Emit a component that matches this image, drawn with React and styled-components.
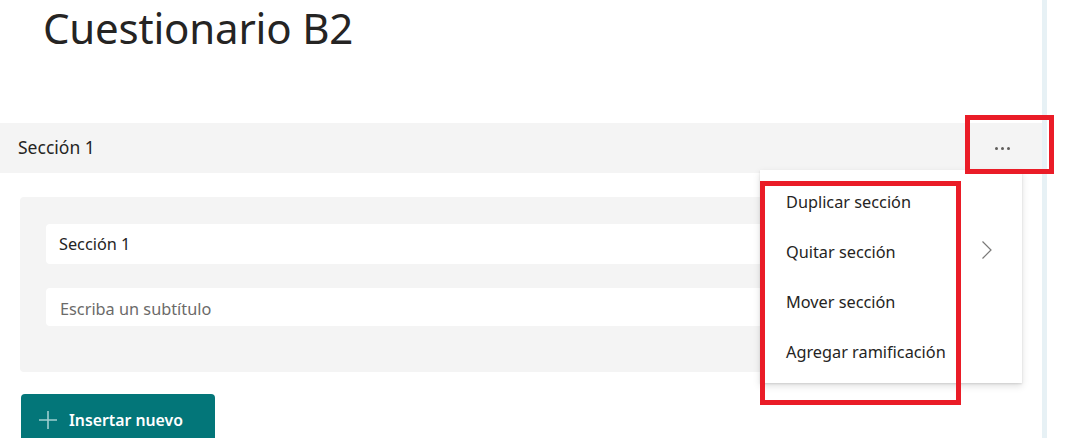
import React from "react";
import styled, { createGlobalStyle } from "styled-components";

const Global = createGlobalStyle`
  html, body { margin: 0; padding: 0; background: #ffffff; }
  body { font-family: "Noto Sans", "Open Sans", sans-serif; color: #252423; }
  * { box-sizing: border-box; }
`;

const Page = styled.div`
  display: flex;
  width: 1090px;
  min-height: 438px;
  overflow: hidden;
`;

const Main = styled.div`
  width: 1042px;
  flex: none;
`;

const Rule = styled.div`
  width: 5px;
  flex: none;
  background: #e7f1f5;
`;

const Title = styled.h1`
  margin: 0;
  padding: 0 0 0 43px;
  height: 123px;
  font-size: 42px;
  font-weight: 400;
  line-height: 55px;
  color: #252423;
  letter-spacing: -0.2px;
`;

const SectionBar = styled.div`
  position: relative;
  height: 50px;
  background: #f4f4f4;
  display: flex;
  align-items: center;
  justify-content: space-between;
  padding-left: 18px;
`;

const SectionName = styled.span`
  font-size: 17.5px;
  color: #252423;
  padding-bottom: 3px;
`;

const MoreButton = styled.button`
  width: 64px;
  height: 50px;
  margin-right: 8px;
  border: none;
  background: transparent;
  display: flex;
  align-items: center;
  justify-content: center;
  gap: 3px;
  padding: 0;
`;

const Dot = styled.span`
  width: 3px;
  height: 3px;
  border-radius: 50%;
  background: #605e5c;
`;

const Highlight = styled.div`
  position: absolute;
  border: 5px solid #ea1c27;
  pointer-events: none;
  z-index: 5;
`;

const MoreHighlight = styled(Highlight)`
  left: 965px;
  top: -8px;
  width: 89px;
  height: 59px;
`;

const Menu = styled.div`
  position: absolute;
  left: 760px;
  top: 47px;
  width: 262px;
  background: #ffffff;
  padding: 7px 0 6px;
  box-shadow: 0 3.2px 7.2px rgba(0, 0, 0, 0.13), 0 0.6px 1.8px rgba(0, 0, 0, 0.11);
  z-index: 4;
`;

const MenuItem = styled.div`
  height: 50px;
  display: flex;
  align-items: center;
  padding-left: 26px;
  font-size: 16.3px;
  color: #252423;
`;

const MenuHighlight = styled(Highlight)`
  left: 0;
  top: 11px;
  width: 201px;
  height: 224px;
`;

const Chevron = styled.svg`
  position: absolute;
  right: 29px;
  top: 70px;
`;

const Content = styled.div`
  padding: 24px 20px 0 20px;
  display: flex;
  flex-direction: column;
  gap: 22px;
`;

const Card = styled.div`
  background: #f4f4f4;
  border-radius: 4px;
  padding: 27px 26px 46px 26px;
  display: flex;
  flex-direction: column;
  gap: 24px;
`;

const Field = styled.div`
  height: ${(p) => p.$h}px;
  background: #ffffff;
  border-radius: 4px;
  display: flex;
  align-items: center;
  padding-left: ${(p) => (p.$placeholder ? 14 : 13)}px;
  padding-top: ${(p) => (p.$placeholder ? 3 : 0)}px;
  font-size: 16.3px;
  color: ${(p) => (p.$placeholder ? "#6b6a69" : "#252423")};
`;

const InsertButton = styled.button`
  width: 194px;
  height: 48px;
  margin-left: 1px;
  border: none;
  border-radius: 4px;
  background: #037679;
  color: #ffffff;
  display: flex;
  align-items: center;
  gap: 12px;
  padding: 3px 0 0 18px;
  font-family: "Noto Sans", sans-serif;
  font-size: 15.8px;
  font-weight: 600;
`;

export default function App() {
  return (
    <>
      <Global />
      <Page>
        <Main>
          <Title>Cuestionario B2</Title>
          <SectionBar>
            <SectionName>Sección 1</SectionName>
            <MoreButton aria-label="Más opciones">
              <Dot />
              <Dot />
              <Dot />
            </MoreButton>
            <MoreHighlight />
            <Menu>
              <MenuItem>Duplicar sección</MenuItem>
              <MenuItem>Quitar sección</MenuItem>
              <MenuItem>Mover sección</MenuItem>
              <MenuItem>Agregar ramificación</MenuItem>
              <Chevron width="12" height="20" viewBox="0 0 12 20">
                <path d="M1.5 1.5 L10 10 L1.5 18.5" fill="none" stroke="#7a7978" strokeWidth="1.2" />
              </Chevron>
              <MenuHighlight />
            </Menu>
          </SectionBar>
          <Content>
            <Card>
              <Field $h={40}>Sección 1</Field>
              <Field $h={38} $placeholder>Escriba un subtítulo</Field>
            </Card>
            <InsertButton>
              <svg width="18" height="18" viewBox="0 0 18 18">
                <path d="M9 0 V18 M0 9 H18" stroke="#9fcfd0" strokeWidth="1.6" fill="none" />
              </svg>
              Insertar nuevo
            </InsertButton>
          </Content>
        </Main>
        <Rule />
      </Page>
    </>
  );
}
